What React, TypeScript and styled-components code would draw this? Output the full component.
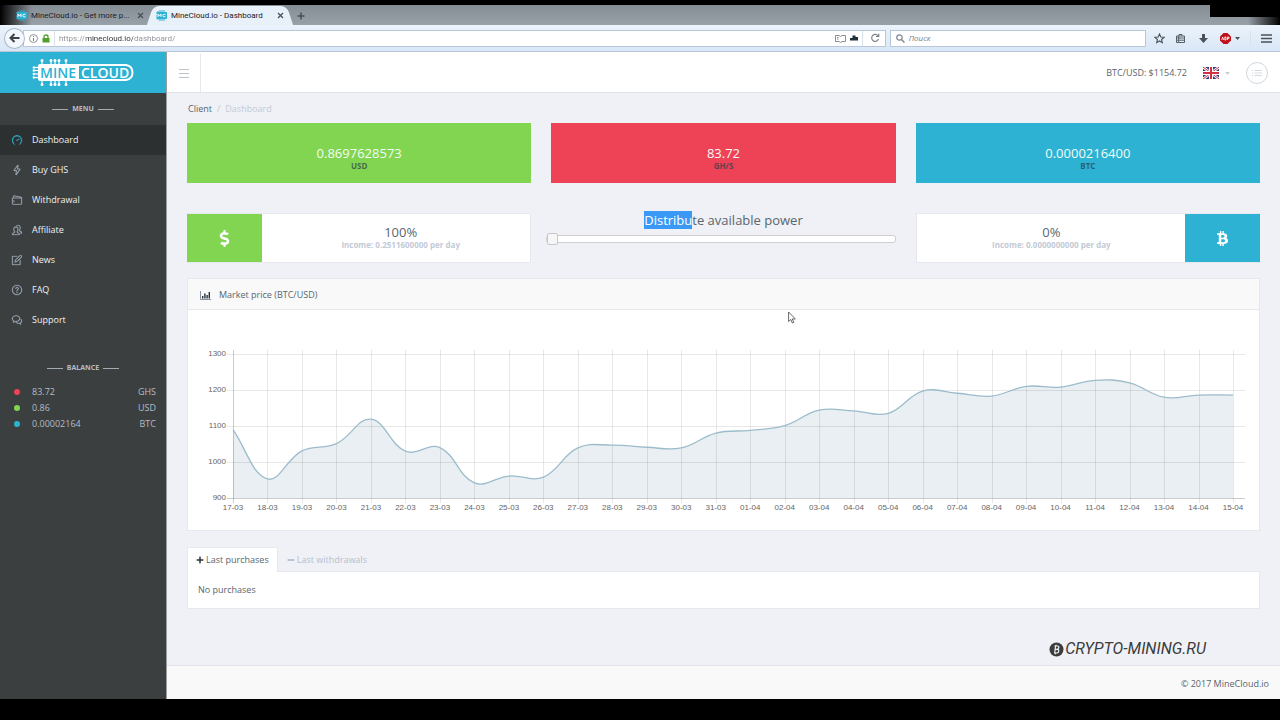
import React, { useState } from 'react';
import styled, { createGlobalStyle } from 'styled-components';
import {
  SlSpeedometer,
  SlEnergy,
  SlWallet,
  SlPeople,
  SlNote,
  SlQuestion,
  SlBubbles,
} from 'react-icons/sl';
import { FaBtc, FaDollarSign, FaPlus, FaMinus } from 'react-icons/fa';

const color = {
  green: '#82d551',
  red: '#ee4357',
  blue: '#2db2d4',
  text: '#58666e',
  dim: '#c3cad6',
  line: '#e6e8ee',
  page: '#eff1f6',
  panel: '#f9f9fa',
  side: '#3b3f40',
  sideActive: '#2d3031',
};

const GlobalStyle = createGlobalStyle`
  * { box-sizing: border-box; }
  body {
    margin: 0;
    background: #000;
    font: 9px/16px "Open Sans", "Noto Sans", sans-serif;
    color: ${color.text};
  }
  button, input { font: inherit; color: inherit; margin: 0; }
  button { padding: 0; border: 0; background: none; cursor: pointer; }
  a { color: inherit; text-decoration: none; }
  svg { display: block; flex: none; }
  h1, h2, p, ul, dl, dd { margin: 0; padding: 0; font: inherit; }
`;

const Screen = styled.div`
  display: flex;
  flex-direction: column;
  min-height: 100vh;
  padding: 5px 0 21px;
  position: relative;
`;

/* ---------- browser window ---------- */

const TabStrip = styled.div`
  display: flex;
  align-items: stretch;
  height: 20px;
  padding: 1px 0 0 10px;
  font-family: Roboto, "Open Sans", sans-serif;
  font-size: 8px;
  color: #1c2024;
  background:
    linear-gradient(90deg, #000 0, transparent 32px),
    linear-gradient(270deg, #000 0, transparent 32px),
    linear-gradient(#858d95, #98a0a8);
`;

const WindowShade = styled.div`
  position: absolute;
  top: 5px;
  right: 0;
  width: 70px;
  height: 12px;
  background: #000;
`;

const BrowserTab = styled.div<{ $active?: boolean }>`
  position: relative;
  z-index: 0;
  display: flex;
  align-items: center;
  gap: 4px;
  width: 140px;
  padding: 0 4px 0 6px;

  &::before,
  &::after {
    content: '';
    display: ${(p) => (p.$active ? 'block' : 'none')};
    position: absolute;
    z-index: -1;
    top: 0;
    bottom: 0;
    width: 55%;
    background: #e8f0fa;
  }
  &::before {
    left: 0;
    transform: skewX(-18deg);
    border-radius: 6px 0 0 0;
  }
  &::after {
    right: 0;
    transform: skewX(18deg);
    border-radius: 0 6px 0 0;
  }
`;

const TabTitle = styled.span`
  flex: 1;
  white-space: nowrap;
`;

const TabButton = styled.button`
  display: grid;
  place-items: center;
  width: 12px;
  color: #4a4f55;
`;

const NewTabButton = styled(TabButton)`
  width: 22px;
`;

const NavBar = styled.div`
  display: flex;
  align-items: center;
  height: 27px;
  padding: 0 8px 0 4px;
  background: linear-gradient(#ebf3fc, #d9e6f6);
  border-bottom: 1px solid #b9c6d6;
`;

const BackButton = styled.button`
  display: grid;
  place-items: center;
  width: 21px;
  height: 21px;
  margin-right: -2px;
  z-index: 1;
  border: 1px solid #aab8c8;
  border-radius: 50%;
  background: #f3f8fe;
  color: #3e4347;
`;

const Field = styled.div<{ $size: number }>`
  display: flex;
  align-items: center;
  gap: 4px;
  flex: ${(p) => `${p.$size} 1 ${p.$size}px`};
  height: 17px;
  margin-right: 4px;
  padding: 0 2px 0 5px;
  border: 1px solid #b8c8da;
  background: #fff;
  color: #6a6f75;
`;

const AddressInput = styled.input`
  flex: 1;
  min-width: 0;
  height: 15px;
  padding: 1px 0 0 4px;
  border: 0;
  border-left: 1px solid #dde2e8;
  font-family: Roboto, "Open Sans", sans-serif;
  font-size: 8px;
  color: transparent;
  background: linear-gradient(90deg, #8b8f94 31px, #2c3034 31px, #2c3034 78px, #8b8f94 78px);
  background-clip: text;
`;

const SearchInput = styled.input`
  flex: 1;
  min-width: 0;
  height: 15px;
  padding: 0;
  border: 0;
  background: none;
  font-size: 8px;
  &::placeholder {
    color: #7d8288;
    font-style: italic;
    opacity: 1;
  }
`;

const Divider = styled.span`
  width: 1px;
  height: 15px;
  background: #d8e0ea;
`;

const ToolGroup = styled.div`
  display: flex;
  align-items: center;
  gap: 10px;
  padding-left: 4px;
  color: #4b5157;
`;

/* ---------- site shell ---------- */

const Site = styled.div`
  display: flex;
  flex: 1;
  background: ${color.page};
`;

const Sidebar = styled.aside`
  display: flex;
  flex-direction: column;
  flex: none;
  width: 167px;
  background: ${color.side};
  border-right: 1px solid #9a9fa2;
  color: #b3bcc6;
`;

const Brand = styled.a`
  display: flex;
  justify-content: center;
  align-items: center;
  height: 41px;
  background: ${color.blue};
`;

const SideHeading = styled.h2`
  display: flex;
  align-items: center;
  justify-content: center;
  gap: 4px;
  height: 32px;
  font-size: 7px;
  font-weight: 700;
  &::before,
  &::after {
    content: '';
    width: 16px;
    height: 1px;
    background: #a3abb2;
  }
`;

const Menu = styled.ul`
  list-style: none;
  margin-bottom: 17px;
`;

const MenuLink = styled.a<{ $active?: boolean }>`
  display: flex;
  align-items: center;
  gap: 10px;
  height: 30px;
  padding-left: 12px;
  color: #eef1f3;
  background: ${(p) => (p.$active ? color.sideActive : 'transparent')};
  svg {
    color: ${(p) => (p.$active ? color.blue : '#a9b4c4')};
    stroke-width: 24px;
    overflow: visible;
  }
`;

const BalanceRow = styled.div<{ $dot: string }>`
  display: flex;
  justify-content: space-between;
  height: 16px;
  padding: 0 10px 0 14px;
  dt {
    order: 2;
  }
  dd {
    display: flex;
    align-items: center;
    gap: 12px;
  }
  dd::before {
    content: '';
    width: 6px;
    height: 6px;
    border-radius: 50%;
    background: ${(p) => p.$dot};
  }
`;

const Main = styled.main`
  display: flex;
  flex-direction: column;
  flex: 1;
  min-width: 0;
`;

const TopBar = styled.header`
  display: flex;
  align-items: center;
  height: 41px;
  padding: 2px 12px 0 0;
  background: #fff;
  border-bottom: 1px solid #e0e3ea;
`;

const MenuToggle = styled.button`
  display: grid;
  place-items: center;
  align-self: stretch;
  width: 34px;
  border-right: 1px solid ${color.line};
  color: #bcc3cc;
`;

const Rate = styled.span`
  margin: 0 16px 0 auto;
`;

const LanguageButton = styled.button`
  display: flex;
  align-items: center;
  gap: 6px;
  margin-right: 16px;
  color: #c9ced6;
`;

const ListButton = styled.button`
  display: grid;
  place-items: center;
  width: 22px;
  height: 22px;
  border: 1px solid #cfd9e0;
  border-radius: 50%;
  color: #c6d2dc;
`;

const Content = styled.div`
  flex: 1;
  padding: 8px 20px 0;
`;

const Breadcrumb = styled.nav`
  display: flex;
  gap: 5px;
  height: 22px;
  padding-left: 1px;
  color: ${color.dim};
  a {
    color: ${color.text};
  }
`;

const Columns = styled.section`
  display: grid;
  grid-template-columns: repeat(3, minmax(0, 1fr));
  gap: 20px;
`;

const StatCard = styled.div<{ $fill: string }>`
  display: flex;
  flex-direction: column;
  align-items: center;
  height: 60px;
  padding-top: 22px;
  margin-bottom: 30px;
  background: ${(p) => p.$fill};
`;

const StatValue = styled.strong`
  font-size: 13px;
  line-height: 16px;
  font-weight: 400;
  color: #f3fbf5;
`;

const StatUnit = styled.span`
  font-size: 8px;
  line-height: 10px;
  font-weight: 700;
  color: rgba(40, 58, 70, 0.7);
`;

const ShareCard = styled.div<{ $reverse?: boolean }>`
  display: flex;
  flex-direction: ${(p) => (p.$reverse ? 'row-reverse' : 'row')};
  height: 50px;
  background: #fff;
  border: 1px solid ${color.line};
`;

const ShareIcon = styled.div<{ $fill: string }>`
  display: grid;
  place-items: center;
  width: 75px;
  margin: 0 -1px;
  background: ${(p) => p.$fill};
  color: #fff;
`;

const ShareBody = styled.div<{ $indent?: boolean }>`
  display: flex;
  flex: 1;
  flex-direction: column;
  align-items: center;
  padding: 10px 0 0 ${(p) => (p.$indent ? 10 : 0)}px;
`;

const ShareValue = styled.strong`
  font-size: 13px;
  line-height: 16px;
  font-weight: 400;
`;

const ShareIncome = styled.span`
  font-size: 8px;
  line-height: 10px;
  font-weight: 700;
  color: ${color.dim};
`;

const Distribution = styled.div`
  margin-left: -5px;
`;

const DistributionLabel = styled.label`
  display: block;
  padding-left: 5px;
  font-size: 13px;
  line-height: 18px;
  margin-top: -2px;
  text-align: center;
  mark {
    background: #3b99f6;
    color: #fff;
  }
`;

const Slider = styled.input`
  display: block;
  appearance: none;
  width: 100%;
  height: 12px;
  margin-top: 4px;
  background: none;
  &::-webkit-slider-runnable-track {
    height: 8px;
    border: 1px solid #cfcfcf;
    border-radius: 3px;
    background: #fff;
  }
  &::-webkit-slider-thumb {
    appearance: none;
    width: 11px;
    height: 12px;
    margin-top: -3px;
    border: 1px solid #c9c9c9;
    border-radius: 2px;
    background: #f6f6f6;
  }
`;

const Panel = styled.section`
  margin-top: 15px;
  background: #fff;
  border: 1px solid ${color.line};
`;

const PanelHeader = styled.h2`
  display: flex;
  align-items: center;
  gap: 8px;
  height: 31px;
  padding: 2px 0 0 12px;
  background: ${color.panel};
  border-bottom: 1px solid ${color.line};
`;

const ChartSvg = styled.svg`
  width: 100%;
  height: auto;
  text {
    font: 8px 'Liberation Sans', Arial, sans-serif;
    fill: #666;
  }
`;

const TabList = styled.div`
  display: flex;
  margin-top: 16px;
`;

const ContentTab = styled.button<{ $active: boolean }>`
  display: flex;
  align-items: center;
  gap: 2px;
  height: 25px;
  padding: 0 8px;
  margin-bottom: -1px;
  border: 1px solid ${(p) => (p.$active ? color.line : 'transparent')};
  border-bottom: 0;
  background: ${(p) => (p.$active ? '#fff' : 'transparent')};
  color: ${(p) => (p.$active ? color.text : '#b4bfcd')};
  svg {
    color: ${(p) => (p.$active ? '#2a3238' : '#a9b6c9')};
  }
`;

const TabPanel = styled.p`
  padding: 10px;
  background: #fff;
  border: 1px solid ${color.line};
`;

const Watermark = styled.div`
  display: flex;
  align-items: center;
  justify-content: flex-end;
  gap: 1px;
  height: 32px;
  margin-right: 74px;
  color: #3c3c3c;
  font: italic 400 16px/20px Roboto, 'Liberation Sans', sans-serif;
`;

const Footer = styled.footer`
  height: 34px;
  padding: 10px 11px 0;
  border-top: 1px solid #e0e3ea;
  background: ${color.panel};
  text-align: right;
`;

const Pointer = styled.svg`
  position: absolute;
  left: 788px;
  top: 311px;
`;

/* ---------- drawings ---------- */

const Favicon = () => (
  <svg width="11" height="11" viewBox="0 0 11 11">
    <path d="M2 1v9M4 0v11M6 0v11M8 0v11M0 3h11M0 6h11M0 8h11" stroke="#2db2d4" strokeWidth="1" />
    <rect x="1" y="2" width="10" height="7" rx="1" fill="#2db2d4" />
    <path d="M2 7V4l1.500 2L5 4v3M9.500 4.300H8Q6.800 4.300 6.800 5.500T8 6.800h1.500" stroke="#fff" fill="none" strokeWidth=".9" />
  </svg>
);

const CloseMark = () => (
  <svg width="7" height="7" viewBox="0 0 7 7">
    <path d="M1 1l5 5M6 1L1 6" stroke="currentColor" strokeWidth="1.300" />
  </svg>
);

const Logo = () => (
  <svg width="102" height="30" viewBox="0 0 102 30" role="img" aria-label="MineCloud">
    <g stroke="#fff" strokeWidth="1.200" fill="#fff">
      {[10, 19, 23, 27, 34].map((x) => (
        <g key={x}>
          <path d={`M${x} 3V27`} />
          <circle cx={x} cy="2.500" r=".9" />
          <circle cx={x} cy="26.500" r=".9" />
        </g>
      ))}
      {[9.500, 12.500, 16, 19.500].map((y) => (
        <g key={y}>
          <path d={`M2 ${y}H7`} />
          <circle cx="1.800" cy={y} r=".6" />
        </g>
      ))}
    </g>
    <rect x="6" y="6" width="41" height="17" rx="2" fill="#fff" />
    <path d="M46 7H94Q100.500 8 100.500 14.500T94 22H46z" fill="#2db2d4" stroke="#fff" strokeWidth="2" />
    <g fontFamily="Open Sans, Noto Sans, sans-serif" fontSize="14" fontWeight="600">
      <text x="8" y="20" fill="#2db2d4">MINE</text>
      <text x="49" y="20" fill="#fff">CLOUD</text>
    </g>
  </svg>
);

const Flag = () => (
  <svg width="16" height="12" viewBox="0 0 16 12">
    <rect width="16" height="12" fill="#2b3f7d" />
    <path d="M0 0L16 12M16 0L0 12" stroke="#fff" strokeWidth="2.600" />
    <path d="M0 0L16 12M16 0L0 12" stroke="#d22f45" strokeWidth="1" />
    <path d="M8 0V12M0 6H16" stroke="#fff" strokeWidth="4" />
    <path d="M8 0V12M0 6H16" stroke="#d22f45" strokeWidth="2" />
  </svg>
);

const Caret = () => (
  <svg width="5" height="3" viewBox="0 0 5 3">
    <path d="M0 0h5L2.500 3z" fill="currentColor" />
  </svg>
);

const BarsIcon = () => (
  <svg width="11" height="9" viewBox="0 0 11 9">
    <path d="M.5 0V8.500H11" stroke="#8792a0" fill="none" />
    <path d="M2.700 7.500V5M4.900 7.500V2.500M7.100 7.500V4M9.300 7.500V1" stroke="#27313a" strokeWidth="1.400" />
  </svg>
);

/* ---------- chart ---------- */

const prices = [
  1090, 953, 1031, 1051, 1119, 1030, 1040, 942, 961, 958, 1039, 1047, 1041, 1039, 1080,
  1088, 1101, 1144, 1142, 1135, 1197, 1191, 1183, 1210, 1208, 1227, 1220, 1180, 1186, 1186,
];
const days = prices.map((_, i) => (i < 15 ? `${i + 17}-03` : `${String(i - 14).padStart(2, '0')}-04`));

const plot = { left: 45, right: 1045, top: 40, bottom: 188, end: 1057 };
const px = (i: number) => plot.left + (i * (plot.right - plot.left)) / (prices.length - 1);
const py = (value: number) => plot.bottom - (value - 900) * 0.36;

function smoothLine(values: number[], tension = 0.4) {
  const pts = values.map((v, i) => ({ x: px(i), y: py(v) }));
  const handles = pts.map((p, i) => {
    const a = pts[Math.max(i - 1, 0)];
    const b = pts[Math.min(i + 1, pts.length - 1)];
    const before = Math.hypot(p.x - a.x, p.y - a.y);
    const after = Math.hypot(b.x - p.x, b.y - p.y);
    const ka = (tension * before) / (before + after);
    const kb = (tension * after) / (before + after);
    return {
      inX: p.x - ka * (b.x - a.x),
      inY: p.y - ka * (b.y - a.y),
      outX: p.x + kb * (b.x - a.x),
      outY: p.y + kb * (b.y - a.y),
    };
  });
  return pts
    .map((p, i) =>
      i === 0
        ? `M${p.x} ${p.y}`
        : `C${handles[i - 1].outX} ${handles[i - 1].outY} ${handles[i].inX} ${handles[i].inY} ${p.x} ${p.y}`,
    )
    .join('');
}

const PriceChart = () => {
  const line = smoothLine(prices);
  return (
    <ChartSvg viewBox="0 0 1071 220" role="img" aria-label="Market price (BTC/USD)">
      <path d={`${line}V${plot.bottom}H${plot.left}z`} fill="#e9eff2" />
      <g stroke="#000">
        {days.map((d, i) => (
          <path key={d} d={`M${Math.round(px(i)) + 0.5} ${plot.top}V${plot.bottom + 5}`} strokeOpacity={i ? 0.09 : 0.2} />
        ))}
        {[900, 1000, 1100, 1200, 1300].map((v) => (
          <path key={v} d={`M${plot.left - 6} ${Math.round(py(v)) + 0.5}H${plot.end}`} strokeOpacity={v === 900 ? 0.2 : 0.09} />
        ))}
      </g>
      <path d={line} fill="none" stroke="#9cbccb" strokeWidth="1.300" />
      {[900, 1000, 1100, 1200, 1300].map((v) => (
        <text key={v} x="38" y={py(v) + 2} textAnchor="end">{v}</text>
      ))}
      {days.map((d, i) => (
        <text key={d} x={px(i)} y="200" textAnchor="middle">{d}</text>
      ))}
    </ChartSvg>
  );
};

/* ---------- page ---------- */

const menu = [
  { label: 'Dashboard', Icon: SlSpeedometer },
  { label: 'Buy GHS', Icon: SlEnergy },
  { label: 'Withdrawal', Icon: SlWallet },
  { label: 'Affiliate', Icon: SlPeople },
  { label: 'News', Icon: SlNote },
  { label: 'FAQ', Icon: SlQuestion },
  { label: 'Support', Icon: SlBubbles },
];

const balances = [
  { amount: '83.72', unit: 'GHS', dot: color.red },
  { amount: '0.86', unit: 'USD', dot: color.green },
  { amount: '0.00002164', unit: 'BTC', dot: color.blue },
];

const stats = [
  { value: '0.8697628573', unit: 'USD', fill: color.green },
  { value: '83.72', unit: 'GH/S', fill: color.red },
  { value: '0.0000216400', unit: 'BTC', fill: color.blue },
];

const BrowserChrome = () => (
  <>
    <TabStrip>
      <BrowserTab>
        <Favicon />
        <TabTitle>MineCloud.io - Get more p...</TabTitle>
        <TabButton aria-label="Close tab"><CloseMark /></TabButton>
      </BrowserTab>
      <BrowserTab $active>
        <Favicon />
        <TabTitle>MineCloud.io - Dashboard</TabTitle>
        <TabButton aria-label="Close tab"><CloseMark /></TabButton>
      </BrowserTab>
      <NewTabButton aria-label="New tab">
        <svg width="8" height="8" viewBox="0 0 8 8"><path d="M4 .5v7M.5 4h7" stroke="currentColor" strokeWidth="1.500" /></svg>
      </NewTabButton>
    </TabStrip>
    <NavBar>
      <BackButton aria-label="Back">
        <svg width="11" height="10" viewBox="0 0 11 10"><path d="M5.500 1L1.500 5l4 4M2 5h8.500" stroke="currentColor" strokeWidth="2" fill="none" /></svg>
      </BackButton>
      <Field $size={865}>
        <svg width="9" height="9" viewBox="0 0 9 9"><circle cx="4.500" cy="4.500" r="4" fill="none" stroke="#777d83" strokeWidth=".8" /><path d="M4.500 4v3M4.500 2v1" stroke="#777d83" /></svg>
        <svg width="8" height="9" viewBox="0 0 8 9"><path d="M2 4V2.800Q2 1 4 1T6 2.800V4" stroke="#4fa12c" strokeWidth="1.300" fill="none" /><rect x=".5" y="4" width="7" height="4.500" fill="#4fa12c" /></svg>
        <AddressInput aria-label="Address" defaultValue="https://minecloud.io/dashboard/" />
        <svg width="11" height="9" viewBox="0 0 11 9"><path d="M.5 1.500H4l1.500 1L7 1.500h3.500v6H7l-1.500 1L4 7.500H.5zM2 3.500h1.500M2 5h1.500" stroke="#6c7278" fill="none" strokeWidth=".8" /></svg>
        <svg width="8" height="6" viewBox="0 0 8 6"><path d="M2.500 .5h3V2H8V5.500H0V3h2.500z" fill="#22303a" /></svg>
        <Divider />
        <svg width="16" height="10" viewBox="0 0 16 10"><path d="M11 2.800A3.500 3.500 0 1 0 11.500 6M11.800 .8V3.500H9" stroke="#7b8187" strokeWidth="1.100" fill="none" /></svg>
      </Field>
      <Field $size={257} as="label">
        <svg width="9" height="9" viewBox="0 0 9 9"><circle cx="3.500" cy="3.500" r="2.700" fill="none" stroke="#7f868e" strokeWidth="1.200" /><path d="M5.500 5.500L8.500 8.500" stroke="#7f868e" strokeWidth="1.500" /></svg>
        <SearchInput aria-label="Поиск" placeholder="Поиск" />
      </Field>
      <ToolGroup>
        <button aria-label="Bookmark"><svg width="11" height="11" viewBox="0 0 11 11"><path d="M5.500 1l1.300 3 3.200.3-2.400 2.200.7 3.200-2.800-1.700-2.800 1.700.7-3.200L1 4.300 4.200 4z" fill="none" stroke="currentColor" strokeWidth="1.100" /></svg></button>
        <button aria-label="Bookmark list"><svg width="11" height="11" viewBox="0 0 11 11"><path d="M1.500 3h8v6.500h-8zM4 3V1.500h3V3M2 5h7M2 7.200h7M3.700 3v6" fill="none" stroke="currentColor" strokeWidth=".9" /></svg></button>
        <button aria-label="Downloads"><svg width="14" height="11" viewBox="0 0 14 11"><path d="M6 1h3v4h3L7.500 10 3 5h3z" fill="currentColor" /></svg></button>
        <button aria-label="Ad blocker">
          <svg width="20" height="11" viewBox="0 0 20 11">
            <path d="M3.500 0h4L11 3.500v4L7.500 11h-4L0 7.500v-4z" fill="#c1121c" />
            <path d="M1.700 7l1-3 1 3M4.800 4v3h1.200V4zM7.500 7V4h1.500v1.500H7.500" stroke="#fff" strokeWidth=".8" fill="none" />
            <path d="M15 4h5l-2.500 3z" fill="#4b5157" />
          </svg>
        </button>
        <Divider />
        <button aria-label="Open menu"><svg width="11" height="9" viewBox="0 0 11 9"><path d="M0 1h11M0 4.500h11M0 8h11" stroke="currentColor" strokeWidth="1.600" /></svg></button>
      </ToolGroup>
    </NavBar>
  </>
);

export default function App() {
  const [share, setShare] = useState(0);
  const [tab, setTab] = useState<'purchases' | 'withdrawals'>('purchases');

  return (
    <Screen>
      <GlobalStyle />
      <BrowserChrome />
      <WindowShade />
      <Site>
        <Sidebar>
          <Brand href="#"><Logo /></Brand>
          <SideHeading>MENU</SideHeading>
          <Menu>
            {menu.map(({ label, Icon }, i) => (
              <li key={label}>
                <MenuLink href="#" $active={i === 0}>
                  <Icon size={10} />
                  {label}
                </MenuLink>
              </li>
            ))}
          </Menu>
          <SideHeading>BALANCE</SideHeading>
          <dl>
            {balances.map((b) => (
              <BalanceRow key={b.unit} $dot={b.dot}>
                <dt>{b.unit}</dt>
                <dd>{b.amount}</dd>
              </BalanceRow>
            ))}
          </dl>
        </Sidebar>
        <Main>
          <TopBar>
            <MenuToggle aria-label="Toggle menu">
              <svg width="10" height="11" viewBox="0 0 10 11"><path d="M0 1.500h10M0 5.500h10M0 9.500h10" stroke="currentColor" /></svg>
            </MenuToggle>
            <Rate>BTC/USD: $1154.72</Rate>
            <LanguageButton aria-label="Language"><Flag /><Caret /></LanguageButton>
            <ListButton aria-label="Activity">
              <svg width="10" height="6" viewBox="0 0 10 6"><path d="M0 .5h1M0 3h1M0 5.500h1M2.500 .5H10M2.500 3H10M2.500 5.500H10" stroke="currentColor" strokeWidth=".8" /></svg>
            </ListButton>
          </TopBar>
          <Content>
            <Breadcrumb aria-label="Breadcrumb">
              <a href="#">Client</a>
              <span>/</span>
              <span>Dashboard</span>
            </Breadcrumb>
            <Columns>
              {stats.map((s) => (
                <StatCard key={s.unit} $fill={s.fill}>
                  <StatValue>{s.value}</StatValue>
                  <StatUnit>{s.unit}</StatUnit>
                </StatCard>
              ))}
            </Columns>
            <Columns>
              <ShareCard>
                <ShareIcon $fill={color.green}><FaDollarSign size={17} /></ShareIcon>
                <ShareBody $indent>
                  <ShareValue>{100 - share}%</ShareValue>
                  <ShareIncome>Income: 0.2511600000 per day</ShareIncome>
                </ShareBody>
              </ShareCard>
              <Distribution>
                <DistributionLabel htmlFor="power">
                  <mark>Distribu</mark>te available power
                </DistributionLabel>
                <Slider id="power" type="range" min={0} max={100} value={share} onChange={(e) => setShare(Number(e.target.value))} />
              </Distribution>
              <ShareCard $reverse>
                <ShareIcon $fill={color.blue}><FaBtc size={15} /></ShareIcon>
                <ShareBody>
                  <ShareValue>{share}%</ShareValue>
                  <ShareIncome>Income: 0.0000000000 per day</ShareIncome>
                </ShareBody>
              </ShareCard>
            </Columns>
            <Panel>
              <PanelHeader><BarsIcon />Market price (BTC/USD)</PanelHeader>
              <PriceChart />
            </Panel>
            <TabList role="tablist">
              <ContentTab role="tab" aria-selected={tab === 'purchases'} $active={tab === 'purchases'} onClick={() => setTab('purchases')}>
                <FaPlus size={8} />Last purchases
              </ContentTab>
              <ContentTab role="tab" aria-selected={tab === 'withdrawals'} $active={tab === 'withdrawals'} onClick={() => setTab('withdrawals')}>
                <FaMinus size={8} />Last withdrawals
              </ContentTab>
            </TabList>
            <TabPanel role="tabpanel">{tab === 'purchases' ? 'No purchases' : 'No withdrawals'}</TabPanel>
          </Content>
          <Watermark>
            <svg width="15" height="15" viewBox="0 0 15 15">
              <circle cx="7.500" cy="7.500" r="7" fill="#3c3c3c" />
              <path d="M5.500 4h3q1.500 0 1.300 1.600T8 7.300H6M6 7.300h2.500q1.500.2 1.200 1.900T8 11H5M6.500 4L5.700 11M7 2.800v1.400M6.500 11v1.300" stroke="#eff1f6" strokeWidth="1.200" fill="none" />
            </svg>
            CRYPTO-MINING.RU
          </Watermark>
          <Footer>© 2017 MineCloud.io</Footer>
        </Main>
      </Site>
      <Pointer width="8" height="13" viewBox="0 0 8 13">
        <path d="M.6 1v9.500l2.200-2 1.500 3.500 1.500-.7-1.500-3.300h3z" fill="#fff" stroke="#444" strokeWidth=".8" />
      </Pointer>
    </Screen>
  );
}
